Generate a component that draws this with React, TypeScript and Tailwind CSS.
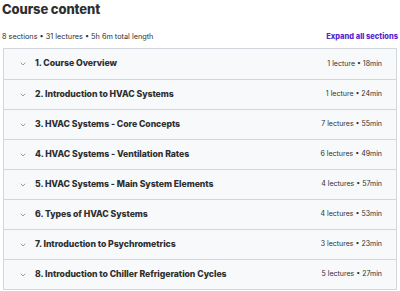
import { ChevronDown } from "lucide-react";

const sections = [
  { title: "1. Course Overview", meta: "1 lecture • 18min" },
  { title: "2. Introduction to HVAC Systems", meta: "1 lecture • 24min" },
  { title: "3. HVAC Systems - Core Concepts", meta: "7 lectures • 55min" },
  { title: "4. HVAC Systems - Ventilation Rates", meta: "6 lectures • 49min" },
  { title: "5. HVAC Systems - Main System Elements", meta: "4 lectures • 57min" },
  { title: "6. Types of HVAC Systems", meta: "4 lectures • 53min" },
  { title: "7. Introduction to Psychrometrics", meta: "3 lectures • 23min" },
  { title: "8. Introduction to Chiller Refrigeration Cycles", meta: "5 lectures • 27min" },
];

export default function App() {
  return (
    <div className="w-[400px] h-[291px] bg-white px-[3px] font-['Inter',sans-serif] text-[#2d2f31] overflow-hidden">
      {/* header */}
      <h2 className="pt-[1px] -ml-[1px] text-[13px] leading-[17px] font-extrabold tracking-[-0.1px]">Course content</h2>
      <div className="mt-[13px] flex items-center justify-between h-[12px]">
        <span className="text-[7.3px] -ml-[1px] text-[#2d2f31]">8 sections • 31 lectures • 5h 6m total length</span>
        <button className="text-[7.5px] font-extrabold text-[#5624d0] -mr-[1px]">Expand all sections</button>
      </div>

      {/* sections */}
      <div className="mt-[5px] border border-[#d1d7dc]">
        {sections.map((s, i) => (
          <div
            key={s.title}
            className={`flex items-center h-[30px] bg-[#f7f9fa] pl-[15px] pr-[14px] ${i > 0 ? "border-t border-[#d1d7dc]" : ""}`}
          >
            <ChevronDown size={8} strokeWidth={2} className="text-[#6a6f73] mr-[8px]" />
            <span className="flex-1 text-[8.7px] font-extrabold tracking-[-0.05px]">{s.title}</span>
            <span className="text-[7px] text-[#2d2f31]">{s.meta}</span>
          </div>
        ))}
      </div>
    </div>
  );
}
